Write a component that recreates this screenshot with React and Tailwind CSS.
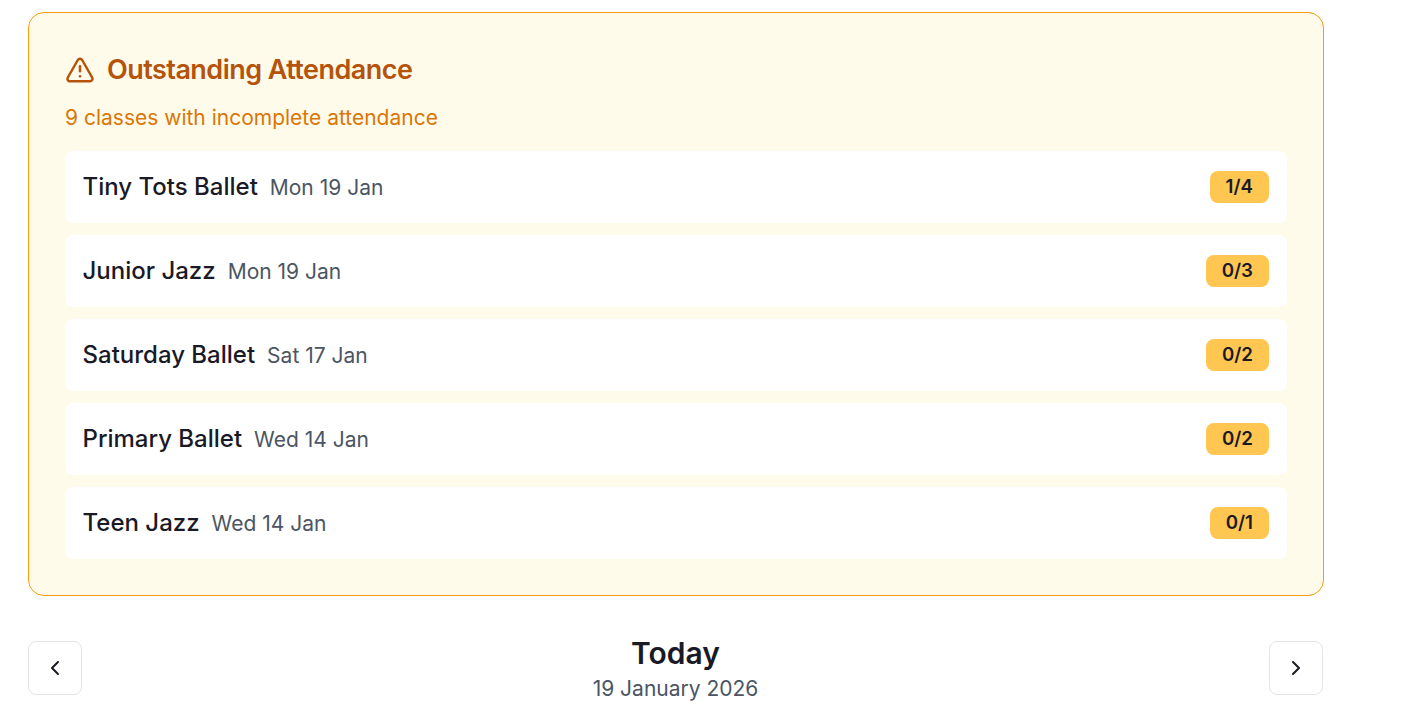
import React from 'react';
import { TriangleAlert, ChevronLeft, ChevronRight } from 'lucide-react';

const classes = [
  { name: "Tiny Tots Ballet", date: "Mon 19 Jan", count: "1/4" },
  { name: "Junior Jazz", date: "Mon 19 Jan", count: "0/3" },
  { name: "Saturday Ballet", date: "Sat 17 Jan", count: "0/2" },
  { name: "Primary Ballet", date: "Wed 14 Jan", count: "0/2" },
  { name: "Teen Jazz", date: "Wed 14 Jan", count: "0/1" }
];

const App = () => {
  return (
    <div className="w-[1416px] h-[715px] overflow-hidden bg-white font-['Inter',sans-serif] pt-3 pl-7 pr-[92px]">
      {/* OUTSTANDING CARD */}
      <div className="bg-[#fffbeb] border border-[#f59e0b] rounded-2xl p-9 mb-[39px]">
        <div className="flex items-center gap-3 h-8 mt-[5px] mb-[18px]">
          <TriangleAlert size={30} strokeWidth={2} className="text-[#b45309]" />
          <h2 className="text-[27px] leading-8 font-semibold tracking-[-0.54px] text-[#b45309]">Outstanding Attendance</h2>
        </div>
        <p className="text-[21px] leading-7 text-[#d97706] mb-[19px]">9 classes with incomplete attendance</p>

        <div className="flex flex-col gap-3">
          {classes.map((item) => (
            <div key={item.name} className="h-[72px] bg-white rounded-lg pl-[17.5px] pr-[18px] flex items-center justify-between">
              <div className="flex items-baseline gap-3">
                <span className="text-[24px] font-[450] text-[#1a1a26]">{item.name}</span>
                <span className="text-[21px] text-[#4b5563]">{item.date}</span>
              </div>
              <span className="h-8 px-4 rounded-lg bg-[#ffc751] text-[18.7px] font-semibold text-[#1a1a26] flex items-center">{item.count}</span>
            </div>
          ))}
        </div>
      </div>

      {/* DATE NAV */}
      <div className="flex items-start justify-between pr-px">
        <button className="w-[54px] h-[54px] mt-[6px] border border-[#e4e4e7] rounded-lg flex items-center justify-center text-[#1a1a26]">
          <ChevronLeft size={24} />
        </button>
        <div className="text-center">
          <h1 className="text-[30px] leading-9 font-semibold text-[#1a1a26]">Today</h1>
          <p className="text-[21px] leading-7 mt-[4px] text-[#4b5563]">19 January 2026</p>
        </div>
        <button className="w-[54px] h-[54px] mt-[6px] border border-[#e4e4e7] rounded-lg flex items-center justify-center text-[#1a1a26]">
          <ChevronRight size={24} />
        </button>
      </div>
    </div>
  );
};

export default App;
